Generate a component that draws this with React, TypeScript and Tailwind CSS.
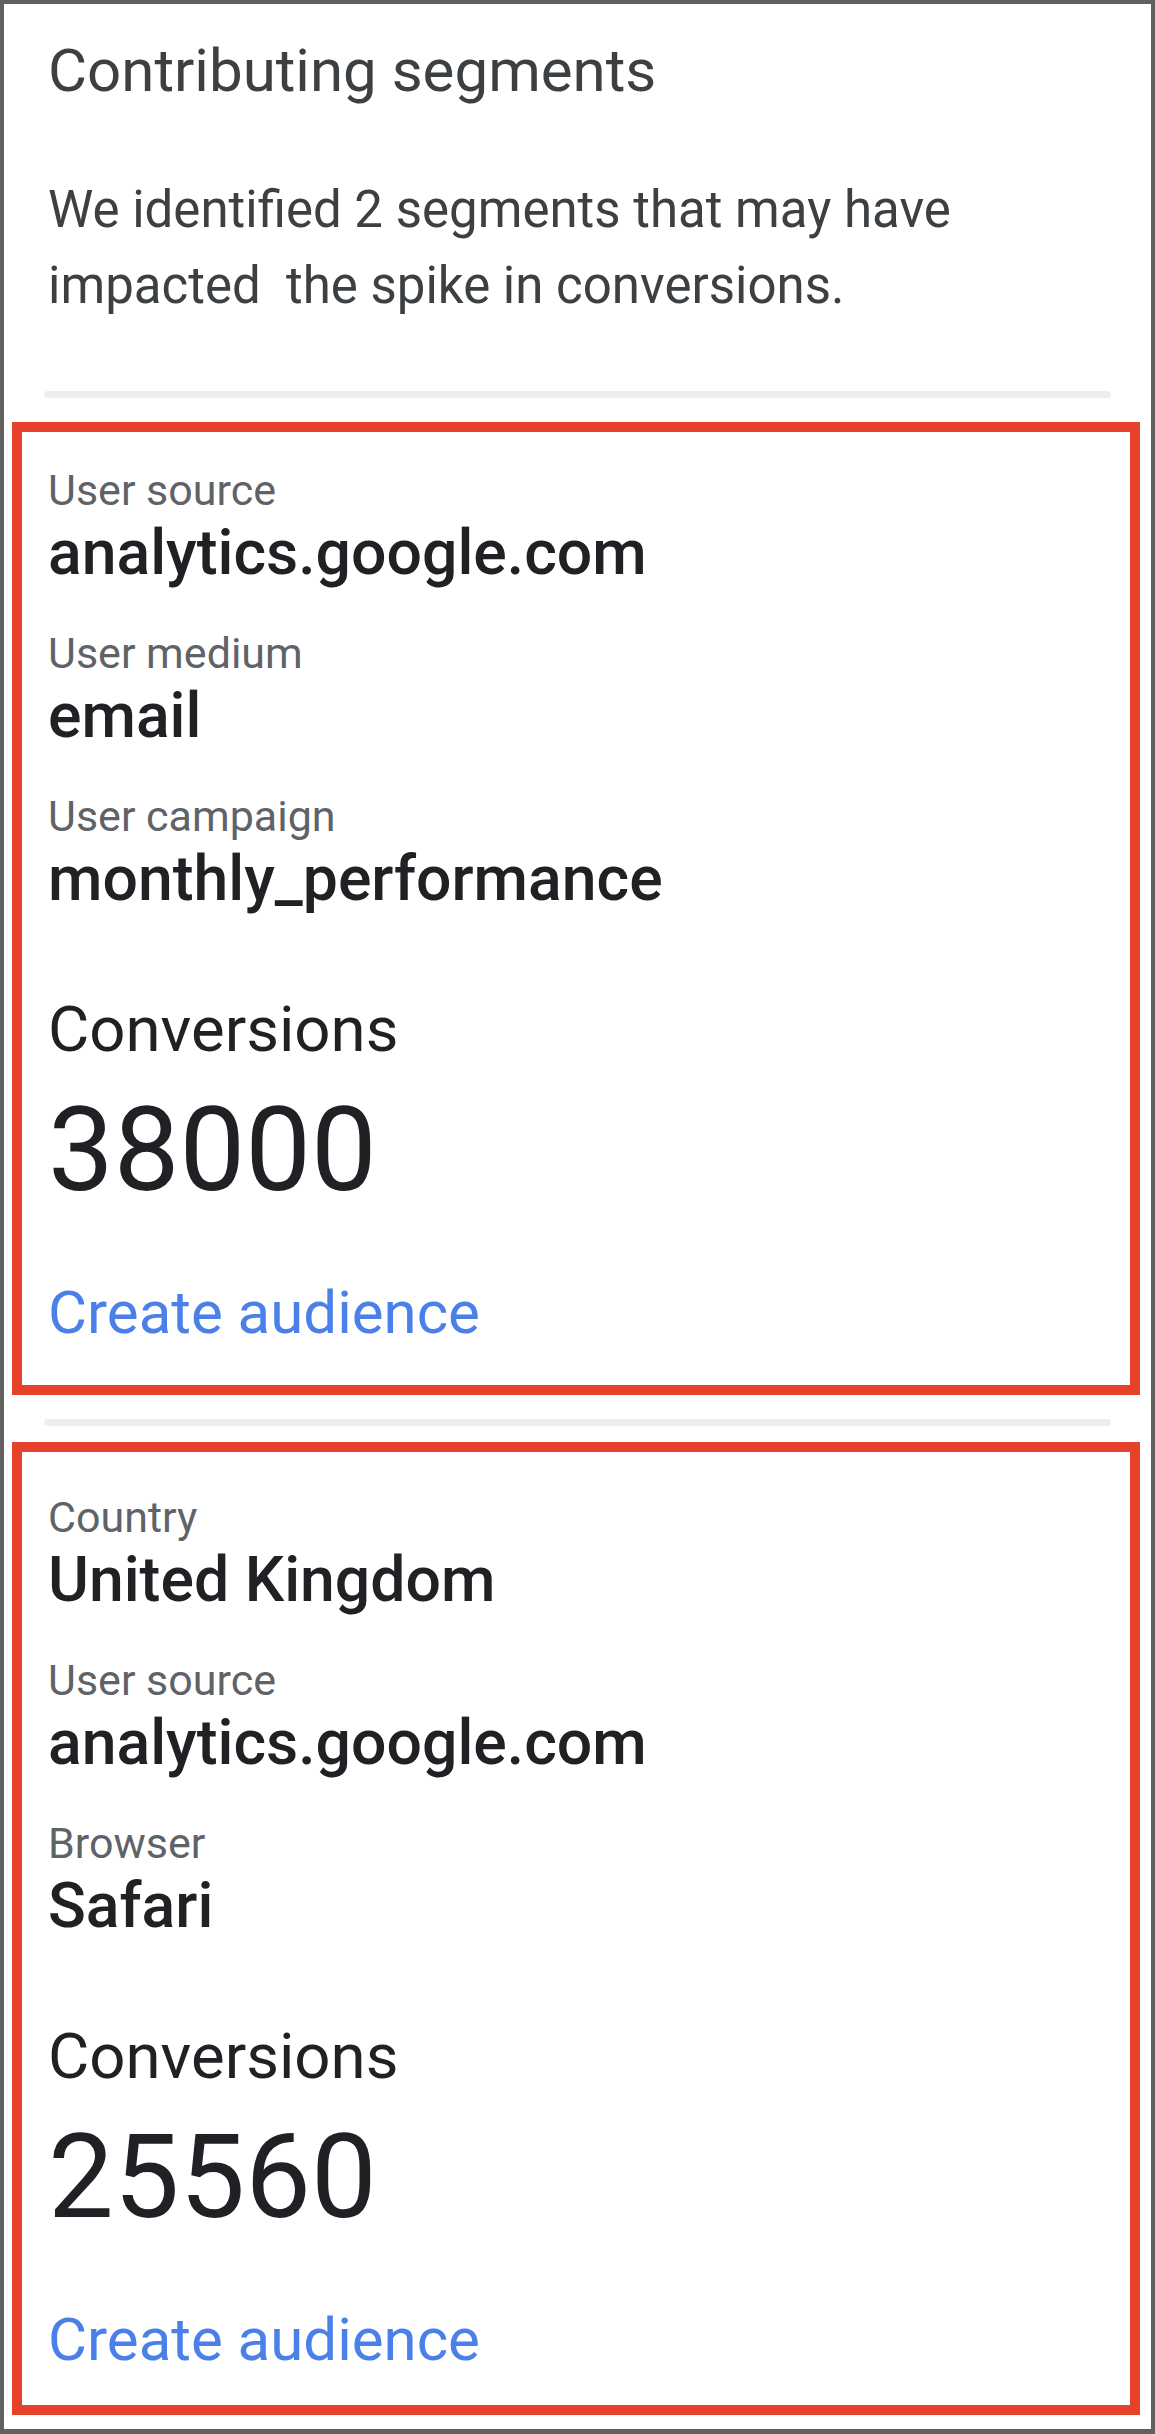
type Field = { label: string; value: string };

type Segment = {
  fields: Field[];
  conversions: string;
  boxClass: string;
};

const segments: Segment[] = [
  {
    fields: [
      { label: "User source", value: "analytics.google.com" },
      { label: "User medium", value: "email" },
      { label: "User campaign", value: "monthly_performance" },
    ],
    conversions: "38000",
    boxClass: "pt-[33px] pb-[38px]",
  },
  {
    fields: [
      { label: "Country", value: "United Kingdom" },
      { label: "User source", value: "analytics.google.com" },
      { label: "Browser", value: "Safari" },
    ],
    conversions: "25560",
    boxClass: "pt-[40px] pb-[31px]",
  },
];

function Divider({ className = "" }: { className?: string }) {
  return <div className={`ml-[32px] mr-[29px] h-[7px] rounded-full bg-[#eceef0] ${className}`} />;
}

function SegmentCard({ seg }: { seg: Segment }) {
  return (
    <div className={`border-[10px] border-[#e6412a] pl-[26px] ${seg.boxClass}`}>
      <div className="flex flex-col gap-[40px]">
        {seg.fields.map((f) => (
          <div key={f.label + f.value}>
            <div className="text-[43px] leading-[50px] text-[#5f6368]">{f.label}</div>
            <div className="mt-[3px] text-[62.5px] leading-[70px] font-medium text-[#202124]">{f.value}</div>
          </div>
        ))}
      </div>

      <div className="mt-[80px] text-[63.5px] leading-[72px] text-[#202124]">Conversions</div>
      <div className="mt-[24px] text-[117px] leading-[120px] text-[#202124]">{seg.conversions}</div>

      <div className="mt-[69px] text-[60px] leading-[68px] text-[#4a80e8]">Create audience</div>
    </div>
  );
}

export default function App() {
  return (
    <div className="w-[1155px] h-[2434px] bg-white border-4 border-b-[5px] border-[#606060] pl-2 pr-[11px] font-['Roboto',sans-serif] overflow-hidden">
      {/* Header */}
      <div className="pl-[36px] pt-[33px]">
        <h1 className="text-[60px] leading-[68px] font-normal text-[#3c4043]">Contributing segments</h1>
        <p className="mt-[67px] text-[51px] leading-[76px] text-[#3c4043]">
          We identified 2 segments that may have
          <br />
          impacted&nbsp; the spike in conversions.
        </p>
      </div>

      <Divider className="mt-[67px] mb-[24px]" />

      <SegmentCard seg={segments[0]} />

      <Divider className="mt-[24px] mb-[16px]" />

      <SegmentCard seg={segments[1]} />
    </div>
  );
}
